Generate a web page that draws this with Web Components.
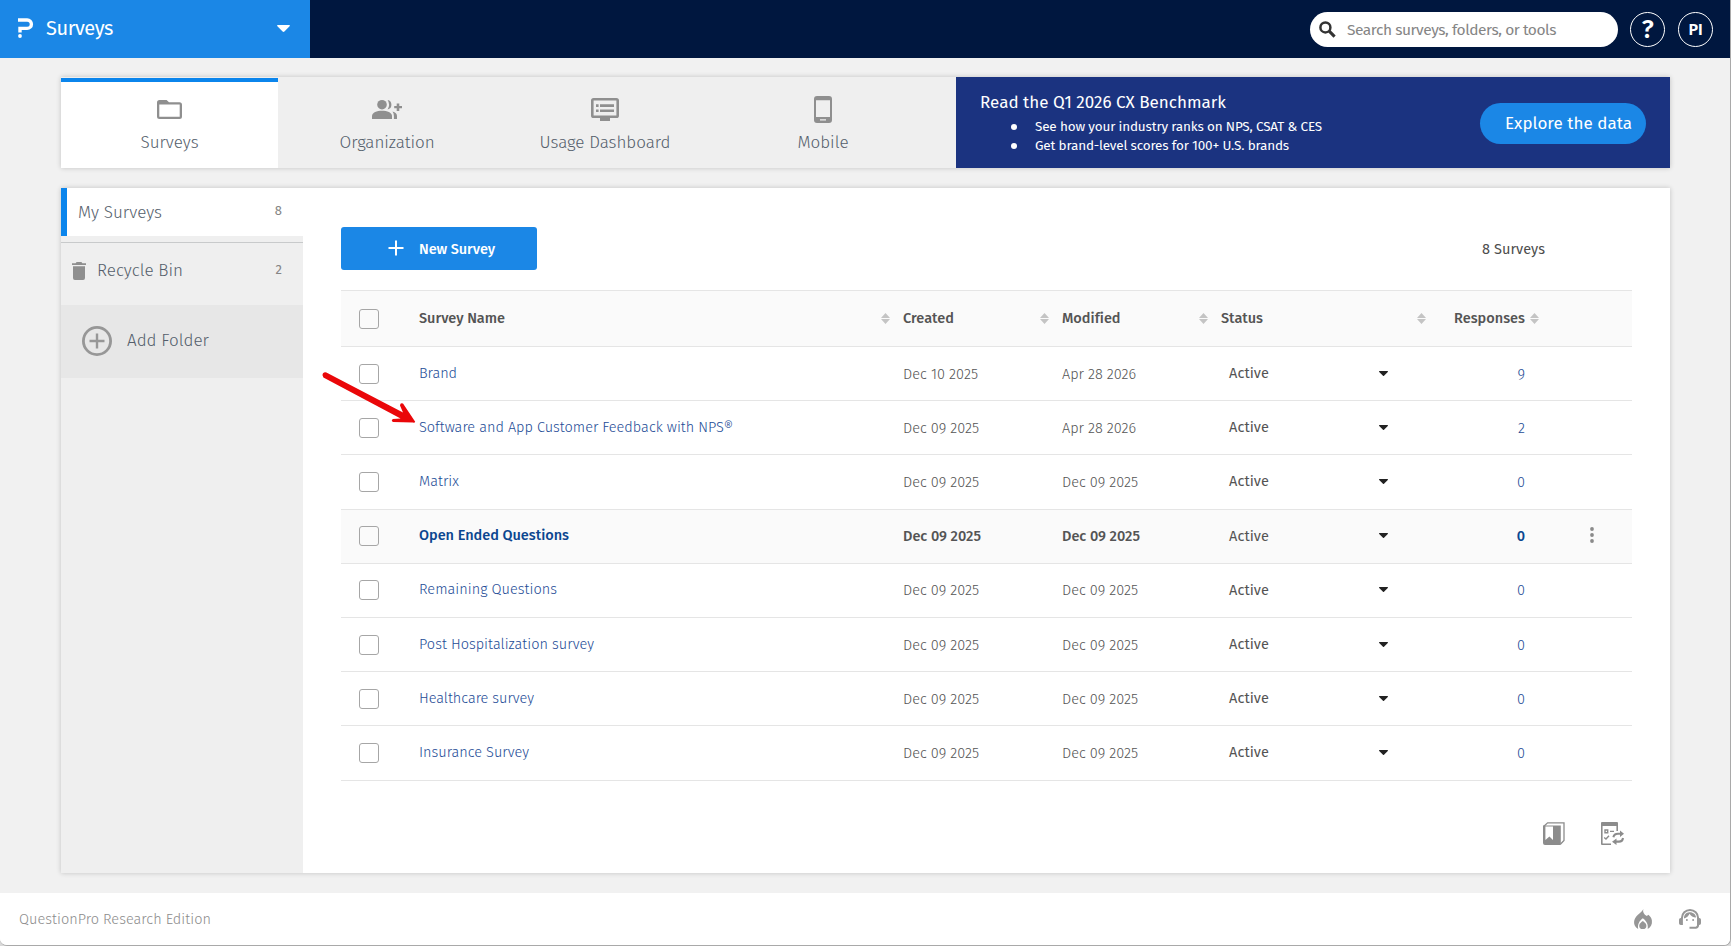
<!DOCTYPE html>
<html lang="en">
<head>
<meta charset="utf-8">
<title>Surveys</title>
<style>
  body {
    margin: 0;
    background: #d9d9d9;
    font-family: "Fira Sans", "Open Sans", "Noto Sans", sans-serif;
    overflow: hidden;
  }
</style>
</head>
<body>
<qp-app></qp-app>

<script>
const ICONS = {
  logo: ['0 0 15 20', '<path d="M0 2H9.2A4.1 4.1 0 0 1 9.2 10.4H2V14.5" fill="none" stroke="currentColor" stroke-width="3.4"/><circle cx="2" cy="18" r="1.9"/>'],
  caret: ['0 0 13 7', '<path d="M.6 0H12.4Q13.4.4 12.6 1.2L7.4 6.5Q6.5 7.3 5.6 6.5L.4 1.2Q-.4.4.6 0Z"/>'],
  search: ['0 0 17 17', '<circle cx="6.4" cy="6.4" r="5" fill="none" stroke="currentColor" stroke-width="2.5"/><path d="M10.2 10.2L15.6 15.6" stroke="currentColor" stroke-width="3.1"/>'],
  folder: ['0 0 25 19', '<path d="M2.5 0H9.6L12 2.3H22.5A2.5 2.5 0 0 1 25 4.8V16.5A2.5 2.5 0 0 1 22.5 19H2.5A2.5 2.5 0 0 1 0 16.5V2.5A2.5 2.5 0 0 1 2.5 0ZM2.3 4.6V16.7H22.7V4.6Z" fill-rule="evenodd"/>'],
  people: ['0 0 30 19', '<circle cx="10" cy="4.7" r="4.8"/><path d="M0 19V16C0 12.6 5 10.8 10 10.8S20 12.6 20 16V19Z"/><path d="M15.6 0A4.8 4.8 0 0 1 15.6 9.4Q18.6 4.7 15.6 0ZM20.5 11.6Q25 13 25 16V19H21.9V16Q21.9 13.2 20.5 11.6ZM24.7 3.4H27.3V5.9H30V8.3H27.3V11H24.7V8.3H22.2V5.9H24.7Z"/>'],
  dvr: ['0 0 28 23', '<path d="M2.6 0H25.4A2.6 2.6 0 0 1 28 2.6V17.4A2.6 2.6 0 0 1 25.4 20H19V23H9V20H2.6A2.6 2.6 0 0 1 0 17.4V2.6A2.6 2.6 0 0 1 2.6 0ZM2.6 2.5V17.5H25.4V2.5Z" fill-rule="evenodd"/><path d="M5 6.3H7.6V8.9H5ZM9 6.3H23V8.9H9ZM5 11.4H7.6V14H5ZM9 11.4H23V14H9Z"/>'],
  phone: ['0 0 18 27', '<path d="M3 0H15A3 3 0 0 1 18 3V24A3 3 0 0 1 15 27H3A3 3 0 0 1 0 24V3A3 3 0 0 1 3 0ZM2 4.2V21H16V4.2ZM6 23.2V24.6H12V23.2Z" fill-rule="evenodd"/>'],
  trash: ['0 0 14 18', '<path d="M0 1.2H3.6L4.6 0H9.4L10.4 1.2H14V3.1H0ZM1 4.3H13V16.1A1.9 1.9 0 0 1 11.1 18H2.9A1.9 1.9 0 0 1 1 16.1Z"/>'],
  addCircle: ['0 0 30 30', '<circle cx="15" cy="15" r="13.6" fill="none" stroke="currentColor" stroke-width="2.8"/><path d="M15 7.5V22.5M7.5 15H22.5" stroke="currentColor" stroke-width="2.4"/>'],
  plus: ['0 0 16 16', '<path d="M8 .5V15.5M.5 8H15.5" stroke="currentColor" stroke-width="2"/>'],
  sort: ['0 0 9 11', '<path d="M4.5 0L9 5H0ZM4.5 11L0 6H9Z"/>'],
  down: ['0 0 9 5', '<path d="M.3 0H8.7Q9.2.4 8.8.9L5 4.7Q4.5 5.2 4 4.7L.2.9Q-.2.4.3 0Z"/>'],
  dots: ['0 0 4 16', '<circle cx="2" cy="2" r="1.9"/><circle cx="2" cy="8" r="1.9"/><circle cx="2" cy="14" r="1.9"/>'],
  book: ['0 0 22 23', '<path d="M.6 4.4L4.6.8H21V18.4L17.6 22" fill="none" stroke="currentColor" stroke-width="1.3"/><path d="M0 3.4H17.8V23H2A2 2 0 0 1 0 21ZM2.4 4.4V18L6.4 14.5L10 18V4.4Z" fill-rule="evenodd"/>'],
  form: ['0 0 23 23', '<path d="M1 0H16A1 1 0 0 1 17 1V9H15.4V4H1.6V21.4H10V23H1A1 1 0 0 1 0 22V1A1 1 0 0 1 1 0Z"/><path d="M4 8H6.7V10.7H4ZM9 9.4H13M3.2 15.4L5 17L8 13.8" fill="none" stroke="currentColor" stroke-width="1.4"/><path d="M12.4 15.2Q13 11.7 17 11.7H19.6M22 16Q21.5 19.6 18 19.6H15" fill="none" stroke="currentColor" stroke-width="2.1"/><path d="M19 8.6L23 11.8L19 15ZM15.5 16.4L11 19.7L15.5 23Z"/>'],
  fire: ['0 0 18 20', '<path d="M9.3 0C8.6 3 1.9 5.7.4 11C-.7 15.2 1.3 18.5 4.2 20C3.4 15.5 5.2 11.9 8.8 9.3C12.6 12 14.4 15.5 13.7 20C16.8 18.5 18.4 15.4 17.9 11.6C17.6 9.2 16.2 7.3 14.4 5.8L12.8 7C9.9 5.6 8.5 3 9.3 0Z"/><path d="M8.9 12.1C7.5 13.2 5.2 14.5 5.2 16.7A3.6 3.4 0 0 0 12.4 16.7C12.4 14.5 10.3 13.3 8.9 12.1Z"/>'],
  agent: ['0 0 22 20', '<path d="M2.9 9.5V9A8.1 8.1 0 0 1 19.1 9V15.5A3 3 0 0 1 16.8 18.7H10.5" fill="none" stroke="currentColor" stroke-width="2"/><path d="M1.8 9H3.9V16H1.8A1.8 1.8 0 0 1 0 14.2V10.8A1.8 1.8 0 0 1 1.8 9ZM18.1 9H20.2A1.8 1.8 0 0 1 22 10.8V14.2A1.8 1.8 0 0 1 20.2 16H18.1Z"/><circle cx="7.9" cy="11" r="1"/><circle cx="14.1" cy="11" r="1"/><path d="M5 9.6C4.8 5.8 7.2 3.4 10.3 3.2C14.3 3 16.8 5.4 17.1 8.5C14.1 8.5 11.8 7.1 10.5 4.8C9.7 7 7.6 8.9 5 9.6Z"/>']
};

// <qp-icon name="folder">
class QpIcon extends HTMLElement {
  constructor() {
    super();
    this.attachShadow({ mode: 'open' });
  }

  connectedCallback() {
    const [box, shape] = ICONS[this.getAttribute('name')];
    const [, , w, h] = box.split(' ');
    this.shadowRoot.innerHTML = `
      <style>
        :host { display: block; flex: none; width: ${w}px; height: ${h}px; }
        svg { display: block; overflow: visible; }
      </style>
      <svg width="${w}" height="${h}" viewBox="${box}" fill="currentColor">${shape}</svg>
    `;
  }
}

// single line label, tracked so that it fills exactly the width in "w"
class QpText extends HTMLElement {
  constructor() {
    super();
    this.attachShadow({ mode: 'open' });
    this.shadowRoot.innerHTML = `
      <style>
        :host { display: inline-block; flex: none; white-space: nowrap; }
      </style>
      <slot></slot>
    `;
  }

  connectedCallback() {
    const target = Number(this.getAttribute('w'));
    if (!target) return;
    const natural = this.getBoundingClientRect().width;
    this.style.letterSpacing = ((target - natural) / this.textContent.trim().length) + 'px';
  }
}

class QpTopbar extends HTMLElement {
  constructor() {
    super();
    this.attachShadow({ mode: 'open' });
    this.shadowRoot.innerHTML = `
      <style>
        :host { display: flex; height: 58px; flex: none; background: #00173f; color: #fff; }
        #product {
          box-sizing: border-box;
          width: 310px;
          padding: 0 20px 2px 18px;
          background: #1b87e6;
          display: flex;
          align-items: center;
          font-size: 20px;
        }
        #product qp-text { margin: 0 auto 0 13px; }
        #tools {
          flex: 1;
          display: flex;
          justify-content: flex-end;
          padding: 12px 17px 0 0;
        }
        #search {
          box-sizing: border-box;
          width: 308px;
          height: 35px;
          border-radius: 18px;
          background: #fff;
          color: #333;
          display: flex;
          align-items: center;
          padding-left: 9px;
          margin-right: 12px;
        }
        #search qp-icon { margin-bottom: 1px; }
        #search qp-text { margin-left: 11px; color: #858585; font-size: 15.5px; }
        .round {
          box-sizing: border-box;
          width: 35px;
          height: 35px;
          border: 1px solid #fff;
          border-radius: 50%;
          display: flex;
          align-items: center;
          justify-content: center;
          font-size: 16px;
          font-weight: 600;
        }
        #help { margin-right: 13px; font-size: 26px; font-weight: 500; }
      </style>
      <div id="product">
        <qp-icon name="logo"></qp-icon>
        <qp-text w="67">Surveys</qp-text>
        <qp-icon name="caret"></qp-icon>
      </div>
      <div id="tools">
        <div id="search"><qp-icon name="search"></qp-icon><qp-text w="209">Search surveys, folders, or tools</qp-text></div>
        <div id="help" class="round">?</div>
        <div class="round">PI</div>
      </div>
    `;
  }
}

class QpTab extends HTMLElement {
  constructor() {
    super();
    this.attachShadow({ mode: 'open' });
    this.shadowRoot.innerHTML = `
      <style>
        :host {
          box-sizing: border-box;
          width: 218px;
          flex: none;
          display: flex;
          flex-direction: column;
          align-items: center;
          padding-top: 1px;
          color: #545e6b;
          font-size: 17px;
          font-weight: 300;
        }
        :host([active]) {
          width: 217px;
          background: linear-gradient(#efefef 1px, #0b85ec 1px, #0b85ec 5px, #fff 5px);
        }
        #icon { height: 62px; margin-bottom: -9px; display: flex; align-items: center; color: #8f8f8f; }
        #label { line-height: 24px; }
      </style>
      <div id="icon"><slot name="icon"></slot></div>
      <div id="label"><slot></slot></div>
    `;
  }
}

class QpBanner extends HTMLElement {
  constructor() {
    super();
    this.attachShadow({ mode: 'open' });
    this.shadowRoot.innerHTML = `
      <style>
        :host {
          box-sizing: border-box;
          display: flex;
          justify-content: space-between;
          align-items: center;
          width: 714px;
          padding: 0 24px 0 24px;
          margin-left: auto;
          background: #1b3380;
          color: #fff;
        }
        #copy { align-self: flex-start; padding-top: 14px; }
        h2 { margin: 0; font-size: 17px; font-weight: 400; line-height: 24px; }
        ul { margin: 2px 0 0 1px; padding: 0; list-style: none; font-size: 13.5px; line-height: 19px; }
        li { display: flex; align-items: center; padding-left: 30px; }
        li::before { content: ""; width: 6px; height: 6px; border-radius: 50%; background: #fff; margin-right: 18px; }
        button {
          width: 166px;
          height: 41px;
          padding: 0 0 1px 11px;
          border: 0;
          border-radius: 21px;
          background: #1b87e6;
          color: #fff;
          font: 400 17px "Fira Sans", "Open Sans", sans-serif;
          margin-top: 2px;
        }
      </style>
      <div id="copy">
        <h2><qp-text w="246">Read the Q1 2026 CX Benchmark</qp-text></h2>
        <ul>
          <li><qp-text w="287">See how your industry ranks on NPS, CSAT &amp; CES</qp-text></li>
          <li><qp-text w="254">Get brand-level scores for 100+ U.S. brands</qp-text></li>
        </ul>
      </div>
      <button><qp-text w="127">Explore the data</qp-text></button>
    `;
  }
}

class QpTabs extends HTMLElement {
  constructor() {
    super();
    this.attachShadow({ mode: 'open' });
    this.shadowRoot.innerHTML = `
      <style>
        :host {
          display: flex;
          height: 91px;
          flex: none;
          background: #efefef;
          box-shadow: 0 0 5px rgba(0,0,0,0.2);
        }
      </style>
      <qp-tab active><qp-icon slot="icon" name="folder"></qp-icon><qp-text w="58">Surveys</qp-text></qp-tab>
      <qp-tab><qp-icon slot="icon" name="people"></qp-icon><qp-text w="95">Organization</qp-text></qp-tab>
      <qp-tab><qp-icon slot="icon" name="dvr"></qp-icon><qp-text w="131">Usage Dashboard</qp-text></qp-tab>
      <qp-tab><qp-icon slot="icon" name="phone"></qp-icon><qp-text w="51">Mobile</qp-text></qp-tab>
      <qp-banner></qp-banner>
    `;
  }
}

class QpSidebar extends HTMLElement {
  constructor() {
    super();
    this.attachShadow({ mode: 'open' });
    this.shadowRoot.innerHTML = `
      <style>
        :host {
          display: block;
          width: 242px;
          flex: none;
          background: #efefef;
          color: #545e6b;
          font-size: 17px;
          font-weight: 300;
        }
        div { box-sizing: border-box; display: flex; align-items: center; }
        qp-icon { color: #8f8f8f; }
        .count { margin-left: auto; font-size: 13px; font-weight: 400; color: #858585; padding-bottom: 3px; }
        #mine {
          height: 48px;
          background: #fff;
          border-left: 6px solid #0b85ec;
          padding: 0 21px 0 11px;
          margin-bottom: 6px;
        }
        #bin {
          height: 63px;
          border-top: 1px solid #c8cacb;
          padding: 0 21px 6px 11px;
        }
        #bin qp-text { margin: 0 0 1px 11px; }
        #add { height: 73px; background: #e7e7e7; padding-left: 21px; }
        #add qp-icon { color: #979797; margin-bottom: 1px; }
        #add qp-text { margin: 0 0 2px 15px; }
      </style>
      <div id="mine"><qp-text w="84">My Surveys</qp-text><span class="count">8</span></div>
      <div id="bin"><qp-icon name="trash"></qp-icon><qp-text w="86">Recycle Bin</qp-text><span class="count">2</span></div>
      <div id="add"><qp-icon name="addCircle"></qp-icon><qp-text w="82">Add Folder</qp-text></div>
    `;
  }
}

class QpRow extends HTMLElement {
  constructor() {
    super();
    this.attachShadow({ mode: 'open' });
    this.shadowRoot.innerHTML = `
      <style>
        :host {
          box-sizing: border-box;
          display: grid;
          grid-template-columns: 78px 484px 159px 159px 218px 102px 91px;
          align-items: center;
          height: 54.2px;
          border-bottom: 1px solid #e5e5e5;
          color: #545454;
          font-size: 14.5px;
          font-weight: 300;
        }
        :host([head]) {
          height: 57px;
          border-top: 1px solid #e5e5e5;
          background: #fafafa;
          font-weight: 500;
        }
        :host([hover]) { background: #fafafa; font-weight: 500; }
        #box {
          box-sizing: border-box;
          width: 20px;
          height: 20px;
          margin-left: 18px;
          border: 1px solid #a6a6a6;
          border-radius: 3px;
          background: #fff;
        }
        :host([head]) #box { margin-top: 1px; background: none; }
        :host([hover]) #box { background: none; }
      </style>
      <span id="box"></span>
      <slot></slot>
    `;
  }
}

const DEC9 = 'Dec 09 2025';
const SURVEYS = [
  { name: 'Brand', w: 38, created: 'Dec 10 2025', modified: 'Apr 28 2026', responses: 9 },
  { name: 'Software and App Customer Feedback with NPS®', w: 314, created: DEC9, modified: 'Apr 28 2026', responses: 2 },
  { name: 'Matrix', w: 40, created: DEC9, modified: DEC9, responses: 0 },
  { name: 'Open Ended Questions', w: 150, created: DEC9, modified: DEC9, responses: 0, hover: true },
  { name: 'Remaining Questions', w: 138, created: DEC9, modified: DEC9, responses: 0 },
  { name: 'Post Hospitalization survey', w: 175, created: DEC9, modified: DEC9, responses: 0 },
  { name: 'Healthcare survey', w: 115, created: DEC9, modified: DEC9, responses: 0 },
  { name: 'Insurance Survey', w: 110, created: DEC9, modified: DEC9, responses: 0 }
];

class QpTable extends HTMLElement {
  constructor() {
    super();
    this.attachShadow({ mode: 'open' });
    this.shadowRoot.innerHTML = `
      <style>
        :host { display: block; position: relative; }
        .th { display: flex; justify-content: space-between; align-items: center; padding-right: 13px; }
        .th qp-icon { color: #c4c4c4; }
        .th qp-text { padding-bottom: 2px; }
        .th.num { padding: 0 2px 0 15px; }
        .name { color: #1d4c96; padding-bottom: 2px; }
        .status {
          display: flex;
          justify-content: space-between;
          align-items: center;
          padding: 0 51px 0 8px;
          font-weight: 400;
        }
        .status qp-text { padding-bottom: 1px; }
        .status qp-icon { color: #222; margin-bottom: 1px; }
        .num.td { color: #1d4c96; text-align: right; padding-right: 16px; }
        [hover] .name, [hover] .num { color: #0b4690; }
        .menu { color: #8a8a8a; margin: 0 0 2px 49px; }
        #arrow { position: absolute; left: -19px; top: 82px; overflow: visible; }
      </style>
      <qp-row head>
        <div class="th"><qp-text w="86">Survey Name</qp-text><qp-icon name="sort"></qp-icon></div>
        <div class="th"><qp-text w="51">Created</qp-text><qp-icon name="sort"></qp-icon></div>
        <div class="th"><qp-text w="58">Modified</qp-text><qp-icon name="sort"></qp-icon></div>
        <div class="th"><qp-text w="42">Status</qp-text><qp-icon name="sort"></qp-icon></div>
        <div class="th num"><qp-text w="71">Responses</qp-text><qp-icon name="sort"></qp-icon></div>
      </qp-row>
      ${SURVEYS.map(s => `
        <qp-row ${s.hover ? 'hover' : ''}>
          <div class="name"><qp-text w="${s.w}">${s.name}</qp-text></div>
          <div class="date"><qp-text w="${s.hover ? 78 : s.created === DEC9 ? 76 : 75}">${s.created}</qp-text></div>
          <div class="date"><qp-text w="${s.hover ? 78 : s.modified === DEC9 ? 76 : 74}">${s.modified}</qp-text></div>
          <div class="status"><qp-text w="40">Active</qp-text><qp-icon name="down"></qp-icon></div>
          <div class="num td">${s.responses}</div>
          ${s.hover ? '<qp-icon class="menu" name="dots"></qp-icon>' : ''}
        </qp-row>
      `).join('')}
      <svg id="arrow" width="96" height="56" viewBox="322 372 96 56" fill="#ea0709">
        <path d="M326.4 372.4L403 412.4L400 405.6Q400.3 402.2 403 403.6L415.2 421.8Q415 422.8 413 422.6L393 422Q390.6 420.3 393 419L400.6 418.6L323.4 377.6Q321.4 375.4 323 373.2Q324.6 371.6 326.4 372.4Z"/>
      </svg>
    `;
  }
}

class QpContent extends HTMLElement {
  constructor() {
    super();
    this.attachShadow({ mode: 'open' });
    this.shadowRoot.innerHTML = `
      <style>
        :host {
          box-sizing: border-box;
          display: flex;
          flex-direction: column;
          flex: 1;
          padding: 39px 38px 28px;
        }
        #bar { display: flex; align-items: center; justify-content: space-between; height: 43px; margin-bottom: 20px; }
        button {
          width: 196px;
          height: 43px;
          border: 0;
          border-radius: 3px;
          background: #1b87e6;
          color: #fff;
          display: flex;
          align-items: center;
          padding: 0 0 0 47px;
          font: 500 14.5px "Fira Sans", "Open Sans", sans-serif;
        }
        button qp-icon { margin-bottom: 1px; }
        button qp-text { margin: 1px 0 0 15px; }
        #total { color: #4d4d4d; font-size: 14.5px; margin: 1px 87px 0 0; }
        #actions { display: flex; justify-content: flex-end; gap: 36px; margin-top: auto; padding-right: 8px; color: #8c8c8c; }
      </style>
      <div id="bar">
        <button><qp-icon name="plus"></qp-icon><qp-text w="76">New Survey</qp-text></button>
        <qp-text id="total" w="63">8 Surveys</qp-text>
      </div>
      <qp-table></qp-table>
      <div id="actions"><qp-icon name="book"></qp-icon><qp-icon name="form"></qp-icon></div>
    `;
  }
}

class QpFooter extends HTMLElement {
  constructor() {
    super();
    this.attachShadow({ mode: 'open' });
    this.shadowRoot.innerHTML = `
      <style>
        :host {
          box-sizing: border-box;
          display: flex;
          align-items: center;
          height: 52px;
          flex: none;
          margin-top: auto;
          padding: 0 29px 0 19px;
          background: #fff;
          color: #8c8c8c;
          font-size: 14.5px;
          font-weight: 300;
        }
        qp-text { margin-right: auto; }
        qp-icon { color: #969696; }
        qp-icon + qp-icon { margin-left: 27px; }
      </style>
      <qp-text w="192">QuestionPro Research Edition</qp-text>
      <qp-icon name="fire"></qp-icon><qp-icon name="agent"></qp-icon>
    `;
  }
}

class QpApp extends HTMLElement {
  constructor() {
    super();
    this.attachShadow({ mode: 'open' });
    this.shadowRoot.innerHTML = `
      <style>
        :host {
          box-sizing: border-box;
          display: flex;
          flex-direction: column;
          width: 1731px;
          height: 946px;
          background: #f1f1f1;
          border-right: 1px solid #a9a9a9;
          border-bottom: 1px solid #a9a9a9;
          border-radius: 0 0 7px 7px;
          overflow: hidden;
        }
        main { display: flex; flex-direction: column; gap: 20px; padding: 19px 60px 0 61px; }
        #panel { display: flex; height: 685px; background: #fff; box-shadow: 0 0 5px rgba(0,0,0,0.2); }
      </style>
      <qp-topbar></qp-topbar>
      <main>
        <qp-tabs></qp-tabs>
        <section id="panel">
          <qp-sidebar></qp-sidebar>
          <qp-content></qp-content>
        </section>
      </main>
      <qp-footer></qp-footer>
    `;
  }
}

customElements.define('qp-app', QpApp);
customElements.define('qp-topbar', QpTopbar);
customElements.define('qp-tabs', QpTabs);
customElements.define('qp-tab', QpTab);
customElements.define('qp-banner', QpBanner);
customElements.define('qp-sidebar', QpSidebar);
customElements.define('qp-content', QpContent);
customElements.define('qp-table', QpTable);
customElements.define('qp-row', QpRow);
customElements.define('qp-footer', QpFooter);
customElements.define('qp-icon', QpIcon);
// last, so the labels measure themselves inside finished containers
customElements.define('qp-text', QpText);
</script>
</body>
</html>
